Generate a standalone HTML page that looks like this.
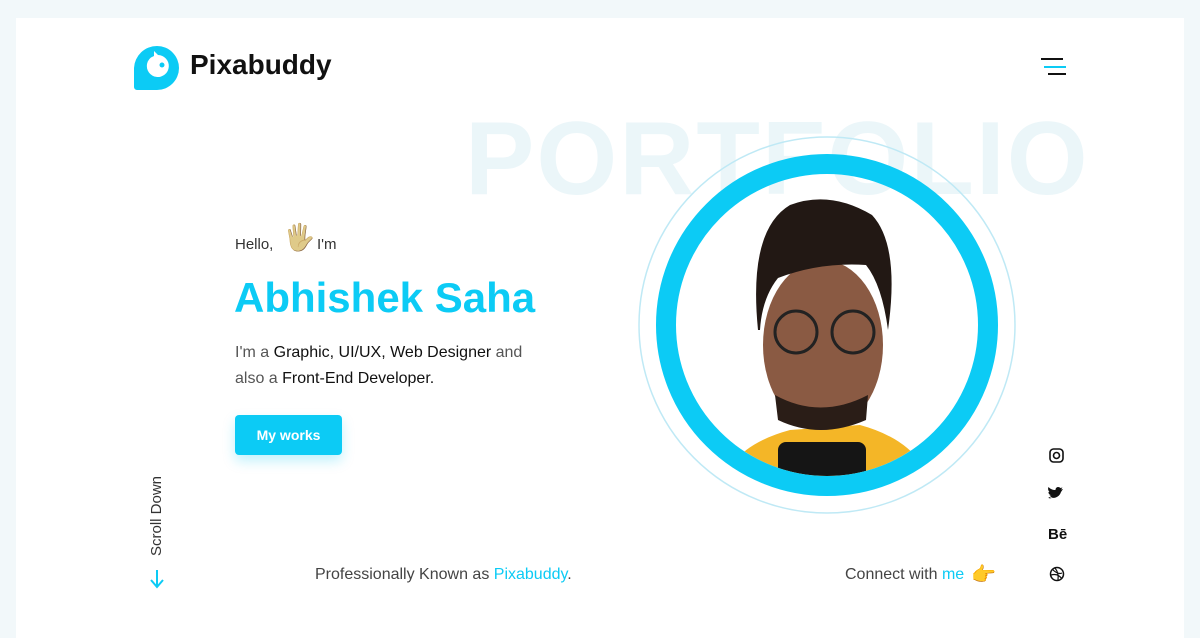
<!DOCTYPE html>
<html><head><meta charset="utf-8"><style>
*{margin:0;padding:0;box-sizing:border-box}
body{width:1200px;height:628px;background:#f2f8fa;font-family:"Liberation Sans",sans-serif;position:relative;overflow:hidden}
.card{position:absolute;left:16px;top:18px;width:1168px;height:620px;background:#fff}
.a{position:absolute}
.port{left:465px;top:100px;font-size:104px;font-weight:bold;color:#ebf6f9;letter-spacing:2px;white-space:nowrap}
.logo{left:190px;top:49px;font-size:28px;font-weight:bold;color:#111}
.t{color:#333;font-size:16px}
.cy{color:#0ccbf5}
.btn{left:235px;top:415px;width:107px;height:40px;background:#0ccbf5;border-radius:4px;color:#fff;font-size:14px;font-weight:bold;text-align:center;line-height:40px;box-shadow:0 6px 12px rgba(12,203,245,.25)}
</style></head><body>
<div class="card"></div>
<div class="a port">PORTFOLIO</div>
<svg class="a" style="left:133px;top:44px" width="48" height="48" viewBox="0 0 48 48"><path d="M24 2a22 22 0 1 1 0 44H4a3 3 0 0 1-3-3V24A23 23 0 0 1 24 2z" fill="#0ccbf5"/><path d="M14 20a11 11 0 1 0 11-9l-4-4v5a11 11 0 0 0-7 8z" fill="#fff"/><circle cx="29" cy="21" r="2.5" fill="#0ccbf5"/></svg>
<div class="a logo">Pixabuddy</div>
<div class="a" style="left:1041px;top:58px;width:22px;height:2px;background:#111"></div>
<div class="a" style="left:1044px;top:66px;width:22px;height:2px;background:#0ccbf5"></div>
<div class="a" style="left:1048px;top:73px;width:18px;height:2px;background:#111"></div>
<svg class="a" style="left:0;top:0" width="1200" height="628">
<defs><clipPath id="c"><circle cx="827" cy="325" r="151"/></clipPath></defs>
<circle cx="827" cy="325" r="188" fill="none" stroke="#bfe9f5" stroke-width="1.5"/>
<g clip-path="url(#c)">
<path d="M725 480 Q735 445 790 430 L860 425 Q915 440 930 480Z" fill="#f4b627"/>
<ellipse cx="823" cy="345" rx="60" ry="85" fill="#8a5a43"/>
<path d="M758 330 Q748 230 790 205 Q830 190 872 215 Q900 245 888 330 Q882 285 866 265 Q820 262 778 278 Q762 298 760 330Z" fill="#221814"/>
<circle cx="796" cy="332" r="21" fill="none" stroke="#222" stroke-width="3"/>
<circle cx="853" cy="332" r="21" fill="none" stroke="#222" stroke-width="3"/>
<path d="M775 395 Q820 420 868 395 L866 420 Q820 440 778 420Z" fill="#2a1d17"/>
<rect x="778" y="442" width="88" height="40" rx="8" fill="#151515"/>
</g>
<circle cx="827" cy="325" r="161" fill="none" stroke="#0ccbf5" stroke-width="20"/>
<path d="M157 570v16M151 580l6 7 6-7" fill="none" stroke="#0ccbf5" stroke-width="2"/>
<rect x="1050" y="449" width="13" height="13" rx="3.5" fill="none" stroke="#111" stroke-width="1.6"/><circle cx="1056.5" cy="455.5" r="3" fill="none" stroke="#111" stroke-width="1.6"/>
<path d="M1049 497c4 2 10 1 12-5l2-3-2 .5 1.5-2-2 .5c-2-2-5-1-5 2-3 0-5-1-7-3-1 2 0 4 1 5h-1c0 2 1 3 3 3l-2 .5c1 1 2 2 3 2-1 1-3 1-4 .5z" fill="#111"/>
<circle cx="1057" cy="574" r="6.5" fill="none" stroke="#111" stroke-width="1.5"/><path d="M1052 569q6 6 10 4M1051 575q7-2 11 4M1055 568q4 5 3 12" fill="none" stroke="#111" stroke-width="1.2"/>
</svg>
<div class="a" style="left:1048px;top:526px;font-size:15px;font-weight:bold;color:#111">Bē</div>
<div class="a t" style="left:235px;top:236px;font-size:15px">Hello,</div>
<div class="a" style="left:283px;top:222px;font-size:26px;filter:grayscale(.6)">🖐</div>
<div class="a t" style="left:317px;top:236px;font-size:15px">I'm</div>
<div class="a cy" style="left:234px;top:274px;font-size:42px;font-weight:bold">Abhishek Saha</div>
<div class="a t" style="left:235px;top:340px;line-height:26px;color:#555">I'm a <span style="color:#111">Graphic, UI/UX, Web Designer</span> and<br>also a <span style="color:#111">Front-End Developer.</span></div>
<div class="a btn">My works</div>
<div class="a" style="left:148px;top:556px;transform:rotate(-90deg);transform-origin:0 0;font-size:15px;color:#333;white-space:nowrap">Scroll Down</div>
<div class="a t" style="left:315px;top:566px;color:#444">Professionally Known as <span class="cy">Pixabuddy</span>.</div>
<div class="a t" style="left:845px;top:566px;color:#444">Connect with <span class="cy">me</span></div>
<div class="a" style="left:971px;top:562px;font-size:20px">👉</div>
</body></html>
